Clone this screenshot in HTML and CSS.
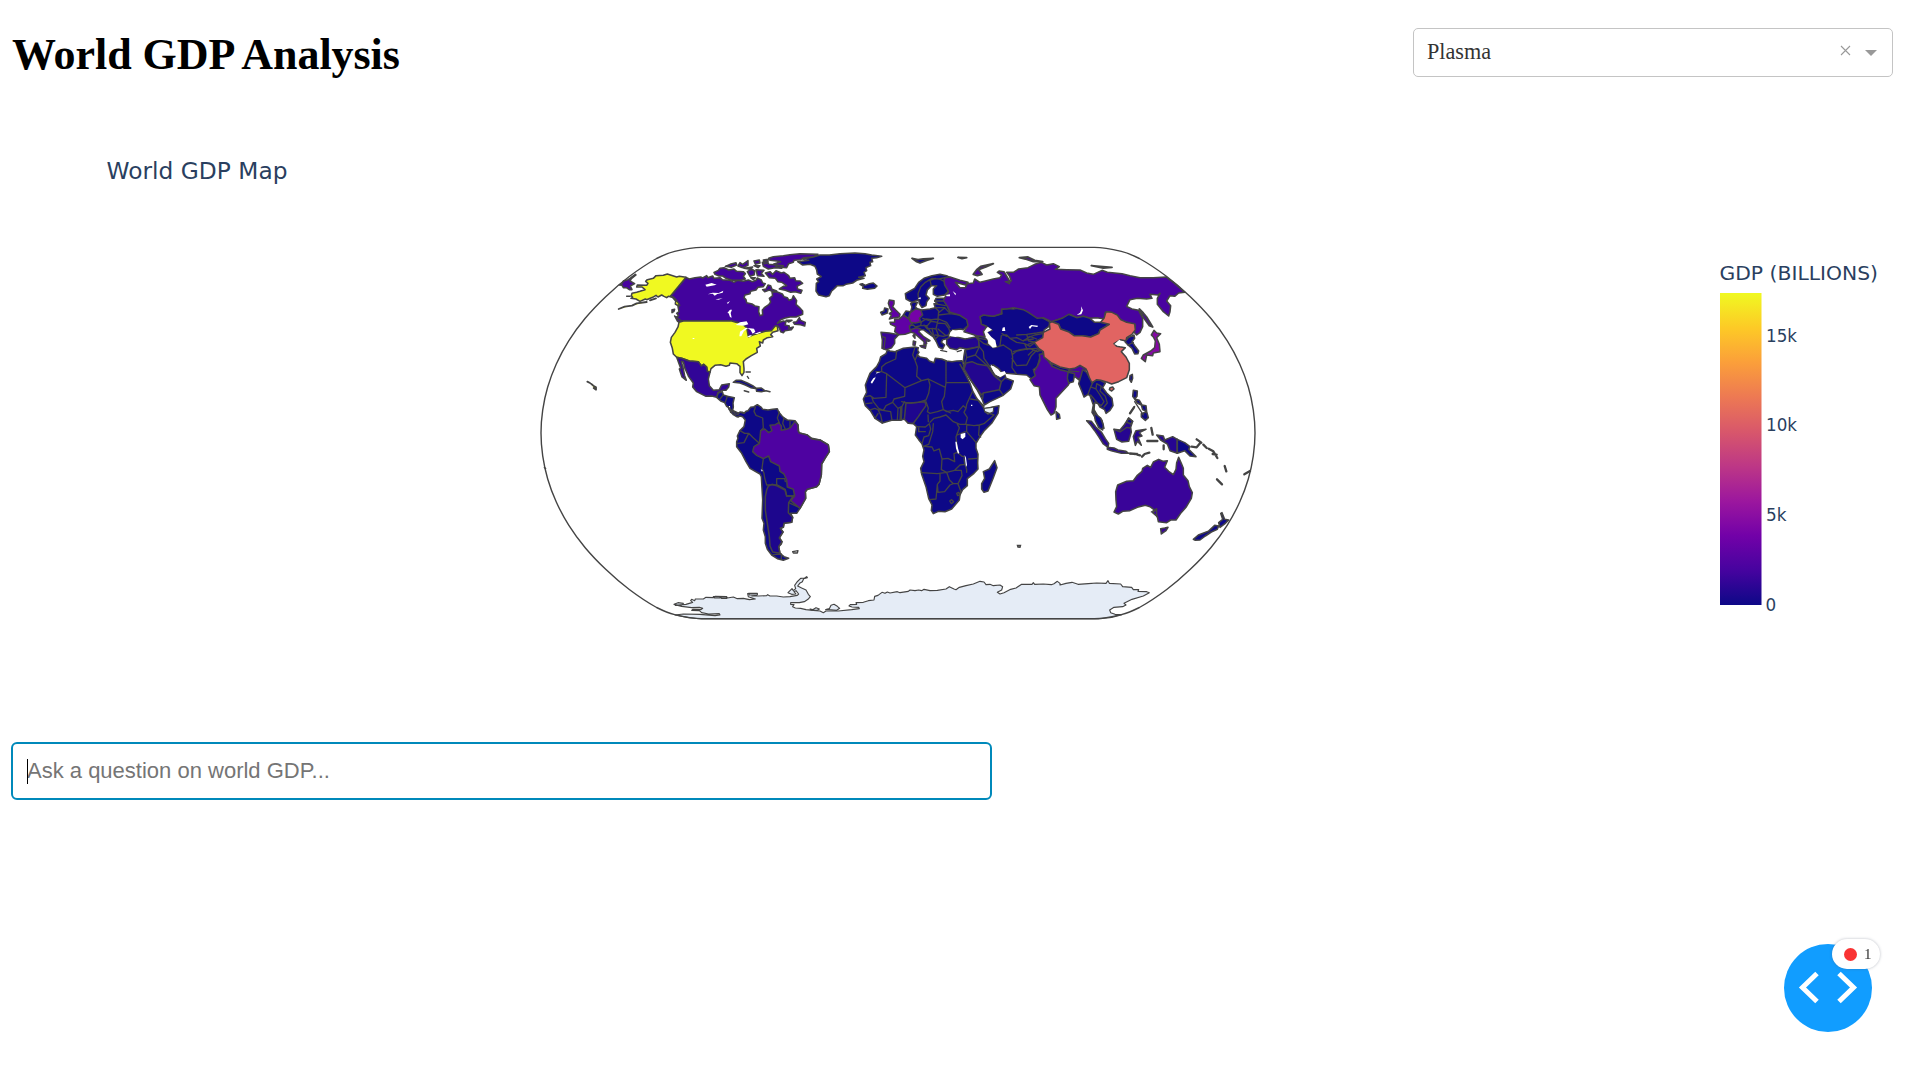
FILE: index.html
```html
<!DOCTYPE html>
<html lang="en">
<head>
<meta charset="utf-8">
<title>World GDP Analysis</title>
<link rel="stylesheet" href="styles.css">
</head>
<body>
<header class="header">
  <h1 class="title">World GDP Analysis</h1>
  <div class="select">
    <span class="select-value">Plasma</span>
    <svg class="select-clear" viewBox="0 0 11 11"><path d="M1 1L10 10M10 1L1 10"/></svg>
    <span class="select-arrow"></span>
  </div>
</header>
<main>
<svg class="chart" viewBox="0 100 1920 620">
  <defs>
    <linearGradient id="plasma" x1="0" y1="1" x2="0" y2="0">
      <stop offset="0" stop-color="#0d0887"/><stop offset=".1111" stop-color="#46039f"/><stop offset=".2222" stop-color="#7201a8"/><stop offset=".3333" stop-color="#9c179e"/><stop offset=".4444" stop-color="#bd3786"/><stop offset=".5556" stop-color="#d8576b"/><stop offset=".6667" stop-color="#ed7953"/><stop offset=".7778" stop-color="#fb9f3a"/><stop offset=".8889" stop-color="#fdca26"/><stop offset="1" stop-color="#f0f921"/>
    </linearGradient>
    <path id="frame-quarter" d="M357 0C357 7.650 356.420 15.290 355.300 22.950S352.570 38.280 350.300 45.960 345.200 61.360 341.700 69.050 334.100 84.500 329.300 92.100 319 107.300 312.800 114.700 299.650 129.300 292.300 136.300 277.200 150.100 268.700 156.500 249 170.300 241.400 174.500C235.400 177.500 230.800 179.800 223.300 181.600S206.500 185.600 196.500 185.600H0"/>
  </defs>
  <text class="chart-title" x="106.500" y="179" textLength="181">World GDP Map</text>

  <!-- Antarctica -->
  <g class="land" transform="translate(650 560) scale(.33333)">
    <path class="none" d="M72 133L84 128 100 130 94 136 76 136 108 133 128 127 122 122 125 118 134 122 136 117 160 117 168 112 190 113 196 109 230 110 232 114 250 111 262 116 280 115 298 119 316 117 295 110 293 101 321 101 319 106 305 108 325 108 350 107 353 104 360 108 380 108 400 111 420 110 442 106 446 102 438 92 432 95 438 102 425 103 414 98 426 86 430 92 437 86 434 76 441 66 452 55 464 54 470 50 472 53 461 56 457 65 449 70 443 78 455 84 468 90 475 103 481 110 474 118 463 125 448 128 422 128 422 133 432 134 428 140 436 144 452 145 468 149 490 151 510 153 520 158 528 153 565 153 605 149 628 146 626 142 606 141 597 138 601 134 620 133 618 128 640 127 655 122 672 120 674 109 684 106 696 97 705 100 712 96 720 99 742 95 750 98 775 94 780 90 795 92 806 90 815 92 822 88 840 92 862 91 888 87 898 80 912 87 918 89 928 82 948 77 970 72 990 64 1002 66 1008 74 1020 73 1030 77 1050 75 1058 80 1055 90 1042 97 1050 102 1062 98 1082 88 1098 84 1115 73 1146 73 1150 68 1154 73 1180 72 1204 74 1212 71 1222 64 1230 70 1230 75 1248 70 1266 67 1284 73 1315 71 1340 69 1368 70 1374 62 1378 70 1412 72 1418 80 1445 82 1450 89 1466 89 1464 94 1490 95 1498 98 1480 108 1446 118 1422 130 1428 135 1418 140 1392 142 1379 150 1382 158 1395 163 1416 164 1385 172 1345 177H155L115 173 75 165 100 162 150 163 195 167 210 165 208 161 176 162 155 158 148 152 125 151 128 148 153 149 158 145 148 142 125 143 95 139Z"/>
    <path class="none" d="M190 110H210V114H194ZM212 111H230V115H214ZM480 147L488 149 498 143 508 147 502 151 484 150ZM527 149L538 146 543 136 552 133 562 139 569 145 560 151 535 149ZM296 100H322V105H298Z"/>
  </g>

  <!-- North America, Greenland, Iceland -->
  <g class="land" transform="translate(530 235) scale(.33333)">
    <path class="russia" d="M268 150L275 147 280 138 294 134 300 130 316 118 318 120 304 131 300 138 314 146 301 153 306 164 298 164 289 158 280 158 276 151Z"/>
    <path class="canada" d="M468 127L478 132 495 128 512 126 518 129 530 122 533 128 548 123 552 130 570 128 577 134 600 136 612 142 622 136 640 139 655 135 667 140 678 136 682 129 694 135 698 144 706 146 700 155 684 157 678 165 662 169 660 176 645 180 642 188 648 194 650 203 666 207 675 213 687 215 686 230 690 242 698 239 697 225 704 217 716 209 722 201 718 190 728 182 726 172 740 170 757 177 762 185 772 188 777 196 786 193 790 182 800 197 798 208 808 217 818 228 818 238 798 246 780 246 766 249 752 254 742 265 760 258 768 260 765 270 778 273 776 280 790 276 784 284 765 287 760 293 752 290 748 279 742 272 738 283 724 287 705 289 690 293 655 305 650 290 635 265 605 258H455L441 253 440 246 446 242 440 235 447 230 444 215 449 211 440 199 430 187 421 184Z"/>
    <path class="canada" d="M716 70L730 65 760 62 780 59 810 56 864 58 850 66 822 68 812 74 792 76 790 82 776 86 770 98 742 96 730 88 752 80 740 78 720 76ZM552 112L565 106 570 100 582 98 596 105 612 102 620 109 640 110 646 116 640 124 646 132 632 136 606 136 588 130 578 123 567 123 555 118ZM586 94L600 88 618 83 620 90 604 97ZM624 93L630 83 638 88 654 77 654 91 638 98ZM672 78L688 75 690 84 676 88ZM697 82L712 78 716 88 760 92 755 100 735 98 715 102 700 94ZM652 110L665 102 674 108 673 119 660 124ZM678 104L702 106 694 115 702 124 682 122ZM700 75L714 73 714 83 704 86ZM706 114L720 110 728 118 738 107 754 114 762 112 776 122 780 130 794 128 797 137 810 138 818 145 801 154 803 162 816 166 812 175 796 170 782 172 766 166 748 162 760 154 770 152 756 142 744 140 736 130 718 128ZM698 164L708 162 714 150 722 152 726 163 740 168 728 170 718 165 704 170ZM790 262L800 260 808 248 812 256 826 262 824 273 812 269 794 268ZM434 243L448 254 458 262 452 265 442 258ZM426 224L434 223 432 229 426 233ZM672 92L690 92 684 98ZM662 128L676 128 670 134ZM642 100L668 96 656 102ZM768 256L786 256 776 261Z"/>
    <path class="usa" d="M468 127L448 124 440 126 412 117 400 121 378 122 370 130 352 134 347 139 354 145 350 151 322 150 320 156 336 156 345 164 330 169 320 172 306 175 304 182 308 187 303 190 318 192 330 199 346 192 350 194 368 187 378 181 384 186 395 180 402 184 410 188 415 184 427 187 437 198 436 207 446 213 447 206 440 197 430 187 421 184ZM300 184L290 184M447 262L460 258H605L618 262 635 265 650 278 655 305 668 300 690 293 706 289 724 287 736 272 742 274 744 287 728 292 722 299 728 305 712 308 700 315 698 324 688 320 691 333 680 340 682 352 664 362 648 372 640 380 642 400 642 412 636 422 630 413 630 394 620 386 600 384 598 391 588 394 572 389 555 391 543 401 540 412 532 409 530 396 521 388 514 393 505 380 478 378 455 370 440 367 430 357 427 340 421 322 424 307 435 292 444 276Z"/>
    <path class="usa coast" d="M266 222L284 215 306 212 320 205 350 201M360 196L378 190M172 440L180 444M184 447L190 452 198 457 198 464 191 459"/>
    <path class="mexico" d="M440 367L455 370 478 378 505 380 514 393 521 388 530 396 532 409 540 412 535 432 538 452 550 466 568 464 575 450 598 446 596 456 588 466 578 466 564 472 560 487 545 483 528 484 500 470 488 456 490 444 476 425 464 398 460 380 454 379 460 402 464 422 469 436 456 426 448 402 452 400Z"/>
    <path class="low" d="M560 487L565 474 577 470 580 480 592 484 613 488 609 504 610 516 608 526 624 534 638 532 646 542 634 540 624 546 616 538 602 532 600 520 590 514 584 503 572 498ZM610 442L618 436 634 436 652 444 668 452 680 461 662 458 646 450 630 444ZM678 460L694 459 706 468 694 470 680 469ZM643 467L656 471ZM708 467L720 470ZM990 148L997 146 1006 151 1018 146 1030 144 1041 153 1034 160 1012 163 998 160 1000 154Z"/>
    <path class="line" d="M578 482L570 492M592 484L586 502M590 514L600 516M648 411L661 411M652 424L656 430"/>
    <path class="low" d="M803 80L836 76 818 72 850 66 870 60 898 60 930 56 975 54 1005 56 1025 60 1055 64 1040 68 1025 70 1028 80 1020 82 1022 92 1008 98 1010 107 1002 112 1006 122 986 127 1002 130 980 136 968 144 948 148 940 152 922 152 912 162 905 168 898 182 888 185 866 180 858 168 859 145 866 140 860 132 874 125 862 117 860 105 855 94 840 88 818 90Z"/>
    <path class="water" d="M526 149L545 144 560 149 546 152 530 155ZM533 178L548 173 566 174 580 167 578 173 562 177 554 182 548 176ZM556 193L578 190 566 194ZM592 234L600 224 606 224 602 234 605 248 600 246 596 235ZM590 204L600 198 594 206ZM617 270L630 262 650 259 655 268 640 272ZM628 304L630 290 648 278 654 280 642 288 634 304ZM653 279L672 281 676 290 668 296 662 286ZM649 307L660 301 666 301 660 306ZM672 297L690 290 694 292 682 297ZM488 309H493V312H488Z"/>
  </g>

  <!-- South America -->
  <g class="land" transform="translate(720 390) scale(.33333)">
    <path class="low" d="M26 56L38 63 46 72 54 73 60 66 72 70 78 64 84 62 92 52 102 50 112 44 124 52 128 58 144 60 158 58 172 56 176 66 186 78 192 84 202 90 225 92 234 104 236 128 262 135 275 145 300 150 325 165 328 185 315 205 305 222 304 255 297 283 290 290 262 298 256 305 257 325 240 355 230 370 212 370 218 382 215 397 192 400 190 412 181 415 189 426 183 434 178 444 186 455 184 462 176 470 180 490 192 500 206 505 190 511 172 506 155 495 142 478 136 460 136 440 130 420 132 400 126 385 128 330 124 260 120 252 90 235 78 215 64 188 50 170 50 155 54 145 52 138 60 122 72 110 76 90 68 80 60 78 50 80 40 74Z"/>
    <path class="arg" d="M145 288L156 283 172 288 195 300 200 318 220 318 206 338 205 368 218 382 215 397 192 400 190 412 181 415 189 426 178 444 186 455 176 470 180 490 158 486 150 468 148 440 142 400 136 360 136 320 140 300Z"/>
    <path class="brazil" d="M122 122L134 117 146 128 156 122 150 106 166 104 176 98 184 108 184 121 200 118 212 112 225 94 234 106 234 122 238 129 262 135 275 147 300 150 325 165 328 185 315 205 305 222 304 255 297 283 290 290 262 298 256 305 257 325 240 355 212 332 224 318 220 298 202 291 200 270 192 252 180 244 178 228 152 215 146 198 130 206 110 196 98 185 102 170 118 160 120 144Z"/>
    <path class="line" d="M106 52L102 64 108 76 128 84 130 114 122 122M60 122L74 130 86 130 98 142 118 160M54 160L72 158 86 130M178 66L172 84 178 98M192 84L188 100 196 118M210 92L210 114M130 206L126 235 132 250 134 264 140 285 170 284 170 266 194 266 196 275M170 284L196 298 200 318 220 318 224 314M206 338L232 350M218 485L234 482 232 489 220 489ZM160 494L184 492 184 506"/>
    <path class="water" d="M122 238L128 241 126 245ZM27 48H30V52H27Z"/>
  </g>

  <!-- Europe, Middle East, Africa -->
  <g class="land" transform="translate(850 235) scale(.33333)">
    <path class="low" d="M112 345L120 348 135 350 160 340 195 336 205 338 203 346 207 352 201 360 210 366 230 370 238 378 252 383 256 370 275 372 290 378 306 380 320 378 336 377 342 394 338 402 330 388 345 415 360 445 368 468 380 490 397 512 403 522 425 517 447 512 444 535 425 565 402 588 390 605 378 625 378 640 384 658 383 684 384 702 372 715 352 731 352 752 338 764 330 780 328 795 305 822 285 830 265 829 250 836 244 826 246 810 236 790 228 755 215 718 212 700 222 680 218 664 222 645 216 626 206 614 196 600 200 575 190 566 175 565 164 552 150 556 125 556 97 564 75 550 62 528 46 512 40 492 50 472 46 450 60 415 80 395 88 380 92 366 108 356Z"/>
    <path class="nigeria" d="M168 503L182 504 205 502 225 500 228 512 215 530 205 545 190 565 175 565 163 553Z"/>
    <path class="none" d="M402 520L425 517 431 516 430 530 414 538 404 530Z"/>
    <path class="water" d="M62 442L70 430 76 427 80 410 94 410 78 416 76 430 66 446Z"/>
    <path class="low" d="M434 677L441 698 430 728 414 768 402 772 395 762 395 746 404 730 400 710 418 702Z"/>
    <path class="line" d="M140 348L137 372 108 385 95 396V410H78M95 410L110 416 108 487 72 490 60 482 48 485M110 416L165 458 215 437 200 424 202 395 195 376 188 360 194 340M165 458L164 484 132 492 128 502 108 512 100 526 86 520 70 500 66 488M203 358L195 376M215 437L235 432 286 457 288 443V378M290 443H358M235 432L240 450 236 475 228 495 205 502 182 504 168 503 155 500M286 457L283 484 275 500 280 524M228 500L235 520 232 530 240 535 262 530 280 524 302 534M235 560L234 540M280 524L290 530 310 526 324 530 340 512 348 520 350 508 368 468M240 562L252 550 270 546 288 540 310 560 330 568 347 568 352 548 342 532 348 520M362 492L385 496 402 514M347 568L372 572 388 570 402 566 432 540 404 530M388 570L386 600 392 606M350 568L350 590 378 622M200 575L226 576 238 566 242 582 236 602 222 606 216 626M206 576V590H226M250 566L248 590 236 628 220 634 246 636 252 648 268 642 276 672 294 670 314 680 312 656 322 652 322 640 318 606 328 578 322 568M322 600L346 590M322 652L336 664 344 664M356 672L382 670M276 672L274 704 290 712 314 706 330 690 344 688 342 668M214 713L262 716 290 712 298 734 310 746 324 746 336 722 334 706 314 706M270 716V738L262 748 264 772 284 770 300 750 310 746M262 748L258 792 238 794M324 746L332 768 330 780M60 525L74 520 84 524 92 540 97 564M75 550L84 536M98 526L122 530 126 556M128 502L144 520 142 556M152 516L150 556M156 514L154 555M144 520L156 514 164 500M84 524L98 526M48 506L66 504M299 798L305 794 311 800 304 806ZM320 775L326 772 329 780 323 782ZM346 690L350 704 350 712"/>
    <path class="water" d="M332 597L346 593 346 605 338 613 332 608ZM316 620H320L324 640 328 654 324 656 318 640ZM344 660L348 668 351 690 348 696 346 680ZM363 509H367V513H363Z"/>
    <!-- continental Europe -->
    <path class="low" d="M160 240L168 228 182 230 186 216 182 206 190 202 202 202 196 216 204 222 215 225 240 222 256 218 252 206 262 206 254 198 258 190 285 190 300 215 328 238 352 252 354 272 340 284 332 282 312 284 300 288 296 300 296 310 278 314 274 322 284 330 278 342 266 336 258 318 250 306 236 296 220 284 212 284 204 282 182 290Z"/>
    <path class="low" d="M168 192L166 176 180 168 194 160 206 142 222 130 246 122 270 118 290 122 300 128 284 134 290 150 296 168 284 180 262 184 250 178 250 162 260 152 244 152 232 165 228 180 238 190 230 200 228 212 216 218 208 206 206 194 186 202Z"/>
    <path class="line" d="M206 194L204 176 212 156 226 142 246 130 268 132 284 128M244 152L240 136 256 130M268 132L284 140"/>
    <path class="uk" d="M115 205L118 195 132 197 132 207 128 215 138 226 150 238 148 246 132 248 118 252 124 240 118 236 126 230 120 220Z"/>
    <path class="low" d="M92 232L102 228 104 219 114 222 112 234 96 240Z"/>
    <path class="spain" d="M93 292L118 294 146 299 134 312 134 325 125 338 108 344 96 340 97 315Z"/>
    <path class="uk" d="M120 262L134 262 134 252 148 252 160 241 178 252 190 260 178 276 183 292 165 298 146 299 134 290 137 275 122 268Z"/>
    <path class="germany" d="M180 234L196 222 212 224 218 240 208 250 212 260 196 264 182 262 176 248Z"/>
    <path class="italy" d="M183 292L182 284 200 278 212 282 206 290 220 304 240 317 235 319 228 316 230 326 222 332 222 320 204 304 192 294ZM210 332L228 331 226 340 214 336ZM190 318L197 320 195 331 189 330ZM189 302L194 296 195 310Z"/>
    <path class="saudi" d="M290 312L304 304 320 306 345 312 378 306 386 316 388 335 350 342 330 338 320 344 300 340 290 328Z"/>
    <path class="line" d="M97 305L106 308 102 342M178 272L190 270 196 276 212 272 214 260M212 262L228 252 244 254 264 252 266 228 256 218M218 250L236 256M212 272L232 272 244 258M240 258L262 262 266 252M222 270L232 282 246 280 258 282 262 264M230 274L248 300M246 280L250 296 258 318M258 282L266 302 258 310M262 264L286 266 296 280 300 290M264 282L288 302M256 300L280 304 294 300M266 252L290 262 300 278M266 240L300 236 328 240M256 218L284 218 300 236M254 206L286 212M254 198L284 198M268 232L284 218M272 346L290 350M322 350L334 346M162 240L176 252"/>
    <!-- Middle East and Central Asia -->
    <path class="low" d="M390 245L400 240 430 244 456 236 454 224 470 220 490 222 520 216 535 230 560 232 580 250 602 262 596 275 582 285 584 306 556 322 580 350 570 366 562 396 550 404 558 418 560 430 552 438 530 420 500 418 470 415 455 412 445 400 430 390 418 392 434 420 450 428 464 418 468 430 490 438 482 462 458 482 420 500 403 510 396 492 380 462 360 432 342 402 344 388 340 378 342 362 345 345 388 335 386 316 376 302 402 306 414 318 412 326 430 338 440 336 432 316 418 304 410 290 426 286 410 274 394 268Z"/>
    <path class="saudi" d="M342 402L348 384 366 380 384 388 412 392 432 422 454 440 448 464 400 474 394 480 360 432Z"/>
    <path class="line" d="M346 345L350 368 344 388M350 368L376 360 388 335M376 360L394 376 412 392M388 335L400 350 402 370 416 390M384 312L402 326 414 330M376 302L388 310 408 314M454 440L466 428M448 464L458 478M400 474L398 490M440 336L460 330 484 346 488 366 486 398 500 418M488 358L500 348 530 342 560 340 570 348M486 370L500 392 530 390 544 362 560 346M458 300L470 300 480 310 500 322 524 326 532 344M450 332L454 302M470 304L456 296M480 310L500 308 520 318 540 304 560 312M500 300L530 298 560 294 584 290M530 298L536 318 558 322M524 326L540 334 556 322"/>
    <path class="water" d="M400 282L414 276 426 284 412 292 424 306 436 316 440 336 428 338 416 326 412 310 404 296ZM458 278L464 276 466 288 456 288ZM536 276L544 270 564 272 562 276 546 274 540 282ZM300 296L308 284 324 290 340 288 354 294 366 300 352 308 336 302 316 306 302 304ZM422 388L430 396 434 408 448 413 464 408 468 416 452 426 440 420 430 408ZM203 190L212 187 212 193Z"/>
  </g>

  <!-- Russia, South and East Asia -->
  <g class="land" transform="translate(1000 235) scale(.33333)">
    <path class="russia" d="M-166 128L-150 126 -120 136 -96 142 -104 150 -134 142 -120 158 -104 158 -98 146 -80 144 -76 132 -60 142 -44 138 -20 132 0 128 5 120 -8 112 -2 108 12 110 18 120 30 140 28 146 16 140 34 138 28 122 20 112 40 112 56 102 84 98 104 88 124 82 140 90 160 86 178 95 166 103 200 104 240 105 260 114 280 118 306 106 322 112 366 116 390 122 420 128 460 128 498 126 520 142 555 172 536 174 524 184 510 182 500 198 512 212 510 230 506 243 490 230 472 208 472 190 480 175 474 180 450 178 456 190 440 192 412 190 390 194 380 214 396 222 416 226 428 250 428 275 420 292 410 300 402 292 406 270 380 262 362 254 350 240 325 230 315 234 314 252 290 248 270 250 250 244 232 248 210 238 186 250 155 260 130 248 112 250 85 232 70 224 40 218 20 222 5 222 4 236 -20 244 -50 240 -60 245 -56 268 -40 275 -50 290 -45 305 -70 302 -88 296 -108 290 -96 272 -100 254 -122 240 -150 232 -158 214 -170 196 -162 182 -154 170 -166 150 -168 136Z"/>
    <path class="russia coast" d="M-80 118L-70 104 -58 94 -20 86 -42 96 -64 104 -54 118 -68 122ZM58 68L84 66 104 76 128 80 100 80 76 72ZM274 92L300 94 336 97 310 99ZM-126 67L-100 68 -114 71ZM418 222L430 234 440 246 458 276 448 272 432 250Z"/>
    <path class="low coast" d="M-264 70L-246 74 -230 72 -200 70 -220 76 -240 84 -250 80Z"/>
    <path class="low" d="M155 260L186 250 206 238 230 248 250 244 270 250 284 262 302 262 328 268 300 285 296 296 272 306 246 302 222 302 205 290 182 282 176 268Z"/>
    <path class="india" d="M118 358L136 356 132 366 145 378 155 392 180 402 206 408 212 402 230 396 240 391 258 402 248 420 236 434 224 424 210 440 205 450 188 468 168 490 168 515 162 535 153 540 142 524 130 500 120 480 118 455 102 452 90 434 106 422 102 410 114 390 120 376Z"/>
    <path class="low" d="M155 384L180 396 208 402 206 410 180 404 156 394ZM204 412L224 416 220 440 206 444 202 430ZM248 404L260 412 270 430 280 440 290 434 302 436 316 444 308 458 320 474 336 490 339 512 330 526 318 535 314 524 300 516 294 506 284 502 282 524 294 544 306 556 312 580 296 572 284 545 276 532 280 510 270 482 264 478 252 486 246 470 236 446ZM168 530L178 538 180 550 170 553Z"/>
    <path class="line" d="M84 328L100 322M84 308L104 300 128 296M70 316L100 312M40 350L60 344 90 340 112 350M85 360L100 346M112 350L128 340"/>
    <path class="china" d="M102 322L128 308 130 292 150 282 148 264 156 260 176 268 182 282 205 290 222 302 246 302 272 306 296 296 300 285 328 268 302 262 312 250 318 230 336 232 352 240 362 254 380 262 404 266 406 285 396 298 380 308 378 318 362 314 342 326 350 334 376 338 364 350 378 366 388 385 388 404 380 428 356 440 335 447 322 442 302 436 290 434 276 444 268 428 262 410 258 402 240 391 224 400 208 402 180 396 155 384 132 366 130 350 116 340ZM330 458L338 456 342 462 335 468 328 464Z"/>
    <path class="low" d="M375 320L385 308 402 300 404 310 396 320 404 332 416 348 414 356 404 357 396 340 384 330Z"/>
    <path class="japan" d="M454 300L462 286 470 294 482 296 470 308 478 328 480 350 460 354 458 362 440 360 436 380 424 370 430 360 452 348 464 338 466 318 460 306Z"/>
    <path class="low" d="M390 422L397 418 398 430 394 442 389 434ZM400 466L412 468 411 484 404 492 398 484ZM404 492L418 496 426 510 438 512 440 530 428 524 424 510 412 504ZM424 536L440 530 445 548 436 556 424 546Z"/>
    <path class="line" d="M264 478L272 456 280 440M272 456L288 462 290 446M288 462L300 480 312 500 304 512 292 504M290 446L304 454 300 468 316 484 322 504 312 516M272 480L292 504M384 330L400 322M206 408L236 410M390 534L404 514M404 500L430 540"/>
    <path class="water" d="M243 214L249 226 244 238 230 240 240 233 244 224ZM343 328L358 314 366 320 376 330 362 334 352 330ZM-162 180L-150 178 -150 184 -160 184ZM-142 168L-132 176 -134 181Z"/>
  </g>

  <!-- South-East Asia and Oceania -->
  <g class="land" transform="translate(1050 340) scale(.33333)">
    <path class="indo" d="M110 242L124 244 138 262 154 276 166 296 176 310 174 322 160 312 146 290 134 272 122 256ZM172 322L192 324 204 330 228 334 236 340 214 340 184 332 172 328ZM192 268L210 270 222 256 236 234 248 244 242 262 244 276 236 304 216 306 200 298ZM250 290L258 272 288 268 268 278 276 288 264 292 274 316 262 304 256 316ZM320 285L340 288 344 300 368 290 382 298 382 340 360 332 352 312 332 300Z"/>
    <path class="low" d="M130 205L136 222 152 234 160 256 158 270 146 262 136 242ZM382 298L404 308 420 320 416 328 438 350 420 348 404 332 382 340ZM236 234L248 244 242 252 230 246Z"/>
    <path class="line island" d="M240 340L256 342M262 344L270 346M276 350L284 342 298 338M304 264L308 284M292 303L322 303M341 316V328M425 320L440 322 450 310M440 298L454 308M460 314L470 324M476 326L490 334 502 354M488 342L500 344M524 378L529 394M501 418L516 433M583 403L600 393M240 220L252 202"/>
    <path class="line" d="M192 268L210 276 230 262 240 264M240 342L262 340"/>
    <path class="aus" d="M203 435L230 424 250 422 262 406 276 394 278 385 292 376 302 382 310 366 326 358 340 364 352 362 344 382 356 394 370 404 378 388 380 368 386 352 394 370 400 385 400 405 414 422 418 440 427 458 424 475 408 502 392 520 378 540 362 540 350 548 325 545 322 530 308 518 316 512 300 500 286 496 262 502 240 512 218 514 205 522 192 516 200 500 198 480 197 455ZM332 566L344 564 354 562 348 572 334 582Z"/>
    <path class="low" d="M430 598L445 585 475 574 494 556 506 558 502 568 484 576 466 588 450 600 436 601ZM506 548L518 538 512 520 516 518 524 538 536 540 524 552 510 562Z"/>
    <path class="line" d="M304 516L320 506 320 530M382 298V340"/>
  </g>
  <path class="line" d="M1017.500 545.500L1020.500 545.500 1020 547.300 1018 547Z"/>

  <!-- projection frame -->
  <use class="globe" href="#frame-quarter" transform="translate(898 433)"/>
  <use class="globe" href="#frame-quarter" transform="translate(898 433) scale(-1 1)"/>
  <use class="globe" href="#frame-quarter" transform="translate(898 433) scale(1 -1)"/>
  <use class="globe" href="#frame-quarter" transform="translate(898 433) scale(-1 -1)"/>
  <path class="line" d="M544 467L546 469"/>

  <rect x="1720" y="293" width="41.500" height="312" fill="url(#plasma)"/>
  <text class="bar-title" x="1719.500" y="280" textLength="158.500" lengthAdjust="spacingAndGlyphs">GDP (BILLIONS)</text>
  <text class="tick" x="1766" y="342" textLength="31" lengthAdjust="spacingAndGlyphs">15k</text>
  <text class="tick" x="1766" y="431" textLength="31" lengthAdjust="spacingAndGlyphs">10k</text>
  <text class="tick" x="1766" y="521" textLength="20.500" lengthAdjust="spacingAndGlyphs">5k</text>
  <text class="tick" x="1765.500" y="611">0</text>
</svg>
<div class="ask">
  <input class="ask-input" type="text" placeholder="Ask a question on world GDP...">
  <span class="caret"></span>
</div>
</main>
<div class="debug">
  <svg class="debug-icon" viewBox="0 0 88 88"><path d="M33 29.500L18.500 43.500 33 57.500M55 29.500L69.500 43.500 55 57.500"/></svg>
  <div class="badge"><span class="dot"></span><span>1</span></div>
</div>
</body>
</html>
```
FILE: styles.css
```css
* { box-sizing: border-box; }
html, body { height: 100%; overflow: hidden; }
body { margin: 0; background: #fff; font-family: "Liberation Serif", "Times New Roman", serif; }
.header { display: flex; justify-content: space-between; align-items: flex-start; height: 100px; padding: 28px 27px 0 12px; }
.title { margin: 1px 0 0; font-size: 44px; line-height: 52px; font-weight: 700; letter-spacing: -.05px; color: #000; }
.select { display: flex; align-items: center; width: 480px; height: 49px; padding: 0 15px 0 13px; border: 1px solid #c4c4c4; border-radius: 5px; }
.select-value { flex: 1; font-size: 22.2px; line-height: 46px; color: #333; padding-bottom: 2px; }
.select-clear { width: 11px; height: 11px; margin: 0 14px 4px 0; fill: none; stroke: #999; stroke-width: 1.1; }
.select-arrow { border: 6px solid transparent; border-top-color: #999; border-bottom: 0; margin-top: 1px; }
.chart { display: block; width: 1920px; height: 620px; font-family: "DejaVu Sans", Verdana, sans-serif; }
.chart text { fill: #2a3f5f; }
.chart-title { font-size: 23.3px; }
.bar-title { font-size: 19px; }
.tick { font-size: 16.8px; }
.land path { stroke: #444; stroke-width: 4.6; stroke-linejoin: round; stroke-linecap: round; }
.land .none { fill: #e5ecf6; stroke-width: 3.4; }
.land .coast { stroke-width: 5.5; }
.land .line { fill: none; stroke-width: 4; }
.land .island { stroke-width: 7; }
.land .water { fill: #fff; stroke: none; }
.line, .globe { fill: none; stroke: #444; stroke-width: 1.4; }
.low { fill: #0d0887; }
.usa { fill: #f0f921; }
.china { fill: #e16462; }
.russia, .india { fill: #4903a0; }
.canada { fill: #42039d; }
.brazil { fill: #4e02a1; }
.mexico { fill: #310597; }
.aus, .spain { fill: #390499; }
.indo { fill: #260591; }
.arg { fill: #1d068d; }
.nigeria { fill: #1f068e; }
.saudi { fill: #23068f; }
.uk { fill: #6001a5; }
.italy { fill: #4f02a2; }
.germany { fill: #7502a8; }
.japan { fill: #8409a4; }
.ask { position: relative; width: 981px; height: 58px; margin: 22px 0 0 11px; }
.ask-input { display: block; width: 100%; height: 100%; padding: 0 14px; border: 2px solid #0089ba; border-radius: 6px; outline: 0; background: #fff; font: 22px "Liberation Sans", Arial, sans-serif; }
.ask-input::placeholder { color: #757575; opacity: 1; }
.caret { position: absolute; left: 16px; top: 17px; width: 1px; height: 25px; background: #000; }
.debug { position: fixed; right: 48px; bottom: 48px; width: 88px; height: 88px; border-radius: 50%; background: #119dff; }
.debug-icon { display: block; width: 88px; height: 88px; fill: none; stroke: #fff; stroke-width: 5; }
.badge { position: absolute; left: 48px; top: -5px; display: flex; align-items: center; gap: 7px; width: 48px; height: 30px; padding-left: 12px; border-radius: 15px; background: #fff; box-shadow: 0 0 3px rgba(80, 90, 110, .4); font-size: 15px; color: #333; }
.dot { width: 13px; height: 13px; border-radius: 50%; background: #f93333; }
```
